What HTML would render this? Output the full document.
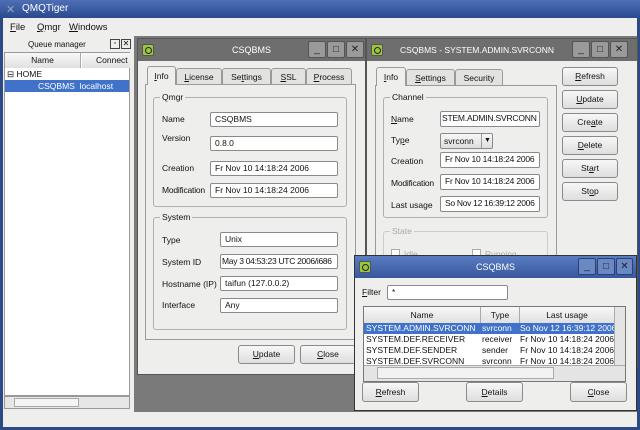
<!DOCTYPE html>
<html><head><style>
*{box-sizing:border-box;margin:0;padding:0}
body{width:640px;height:430px;overflow:hidden;background:#2c4a86;font-family:"Liberation Sans",sans-serif;font-size:8.5px;color:#111;position:relative}
.a{position:absolute}
.bg{background:#eeeeec}
.in{position:absolute;background:#fff;border:1px solid #8a8a8a;border-radius:2px;padding-left:4px;line-height:13px;white-space:nowrap;overflow:hidden;font-size:8.5px}
.lb{position:absolute;font-size:8.5px;white-space:nowrap}
.btn{position:absolute;background:linear-gradient(#f7f7f7,#dedede);border:1px solid #8a8a8a;border-radius:3px;text-align:center;font-size:8.5px}
.grp{position:absolute;border:1px solid #b0b0b0;border-radius:3px}
.gt{position:absolute;top:-6px;left:6px;background:#eeeeec;padding:0 2px;font-size:8.5px}
.tab{position:absolute;background:#e2e2e0;border:1px solid #9a9a9a;border-bottom:none;border-radius:3px 3px 0 0;text-align:center;font-size:8.5px;line-height:16px}
.tab.on{background:#eeeeec;z-index:2}
.pane{position:absolute;border:1px solid #9a9a9a;background:#eeeeec}
.tb{position:absolute;height:22px;color:#fff;font-size:9px;text-align:center;line-height:22px;white-space:nowrap}
.ic{position:absolute;width:12px;height:12px;background:#9bc83a;border:1px solid #555;border-radius:2px}
.ic:after{content:"";position:absolute;left:2px;top:2px;width:5px;height:5px;border:1.5px solid #222;border-radius:50%}
.wb{position:absolute;width:18px;height:17px;border:1px solid #555;border-radius:2px;color:#222;text-align:center;line-height:15px;font-size:10px}
u{text-decoration:underline}
</style></head><body>
<div class="a" style="left:0;top:0;width:640px;height:18px;background:linear-gradient(#4e6fb5,#2a4a90)"></div>
<div class="a" style="left:6px;top:3px;color:#9ab;font-size:11px">✕</div>
<div class="a" style="left:22px;top:3px;color:#fff;font-size:10px">QMQTiger</div>
<div class="a bg" style="left:3px;top:18px;width:634px;height:409px"></div>
<div class="lb" style="left:10px;top:22px;font-size:9.5px"><u>F</u>ile</div>
<div class="lb" style="left:37px;top:22px;font-size:9.5px"><u>Q</u>mgr</div>
<div class="lb" style="left:69px;top:22px;font-size:9.5px"><u>W</u>indows</div>
<div class="lb" style="left:28px;top:40px;font-size:8px">Queue manager</div>
<div class="a" style="left:110px;top:39px;width:10px;height:10px;border:1px solid #444;font-size:7px;line-height:8px;text-align:center">▫</div>
<div class="a" style="left:121px;top:39px;width:10px;height:10px;border:1px solid #444;font-size:8px;line-height:8px;text-align:center">✕</div>
<div class="a" style="left:4px;top:52px;width:126px;height:344px;background:#fff;border:1px solid #999"></div>
<div class="a" style="left:5px;top:53px;width:76px;height:15px;background:linear-gradient(#f8f8f8,#e0e0e0);border-right:1px solid #aaa;text-align:center;line-height:15px">Name</div>
<div class="a" style="left:82px;top:53px;width:48px;height:15px;background:linear-gradient(#f8f8f8,#e0e0e0);padding-left:14px;line-height:15px">Connect</div>
<div class="lb" style="left:7px;top:69px">⊟ HOME</div>
<div class="a" style="left:5px;top:80px;width:124px;height:12px;background:#3f72c8;color:#fff;padding-left:33px;line-height:12px">CSQBMS&nbsp; localhost</div>
<div class="a" style="left:4px;top:396px;width:126px;height:13px;background:#e6e6e6;border:1px solid #999"></div>
<div class="a" style="left:14px;top:398px;width:65px;height:9px;background:#f4f4f4;border:1px solid #aaa"></div>
<div class="a" style="left:134px;top:36px;width:503px;height:376px;background:#7a7a7a"></div>

<div class="a bg" style="left:137px;top:38px;width:229px;height:337px;border:1px solid #555"></div>
<div class="tb" style="left:138px;top:39px;width:227px;background:#6e6e6e">CSQBMS</div>
<div class="ic" style="left:142px;top:44px"></div>
<div class="wb" style="left:308px;top:41px;background:#9a9a9a">_</div>
<div class="wb" style="left:327px;top:41px;background:#9a9a9a">□</div>
<div class="wb" style="left:346px;top:41px;background:#9a9a9a">✕</div>
<div class="pane" style="left:145px;top:84px;width:211px;height:256px"></div>
<div class="tab on" style="left:147px;top:66px;width:29px;height:19px;line-height:18px"><u>I</u>nfo</div>
<div class="tab" style="left:176px;top:68px;width:46px;height:16px"><u>L</u>icense</div>
<div class="tab" style="left:222px;top:68px;width:49px;height:16px">Se<u>t</u>tings</div>
<div class="tab" style="left:271px;top:68px;width:35px;height:16px"><u>S</u>SL</div>
<div class="tab" style="left:306px;top:68px;width:46px;height:16px"><u>P</u>rocess</div>
<div class="grp" style="left:153px;top:97px;width:194px;height:110px"><span class="gt">Qmgr</span></div>
<div class="lb" style="left:162px;top:114px">Name</div>
<div class="lb" style="left:162px;top:133px">Version</div>
<div class="lb" style="left:162px;top:163px">Creation</div>
<div class="lb" style="left:162px;top:185px;letter-spacing:-0.2px">Modification</div>
<div class="in" style="left:210px;top:112px;width:128px;height:15px">CSQBMS</div>
<div class="in" style="left:210px;top:136px;width:128px;height:15px">0.8.0</div>
<div class="in" style="left:210px;top:161px;width:128px;height:15px">Fr Nov 10 14:18:24 2006</div>
<div class="in" style="left:210px;top:183px;width:128px;height:15px">Fr Nov 10 14:18:24 2006</div>
<div class="grp" style="left:153px;top:217px;width:194px;height:113px"><span class="gt">System</span></div>
<div class="lb" style="left:162px;top:235px">Type</div>
<div class="lb" style="left:162px;top:257px">System ID</div>
<div class="lb" style="left:162px;top:279px">Hostname (IP)</div>
<div class="lb" style="left:162px;top:300px">Interface</div>
<div class="in" style="left:220px;top:232px;width:118px;height:15px">Unix</div>
<div class="in" style="left:220px;top:254px;width:118px;height:15px;padding-left:1px;letter-spacing:-0.3px">May 3 04:53:23 UTC 2006/i686</div>
<div class="in" style="left:220px;top:276px;width:118px;height:15px">taifun (127.0.0.2)</div>
<div class="in" style="left:220px;top:298px;width:118px;height:15px">Any</div>
<div class="btn" style="left:238px;top:345px;width:57px;height:19px;line-height:17px"><u>U</u>pdate</div>
<div class="btn" style="left:300px;top:345px;width:56px;height:19px;line-height:17px"><u>C</u>lose</div>

<div class="a bg" style="left:366px;top:38px;width:272px;height:330px;border:1px solid #555"></div>
<div class="tb" style="left:367px;top:39px;width:270px;background:#6e6e6e;padding-right:50px;font-size:8.5px">CSQBMS - SYSTEM.ADMIN.SVRCONN</div>
<div class="ic" style="left:371px;top:44px"></div>
<div class="wb" style="left:572px;top:41px;background:#9a9a9a">_</div>
<div class="wb" style="left:591px;top:41px;background:#9a9a9a">□</div>
<div class="wb" style="left:610px;top:41px;background:#9a9a9a">✕</div>
<div class="pane" style="left:375px;top:85px;width:182px;height:180px"></div>
<div class="tab on" style="left:376px;top:67px;width:30px;height:19px;line-height:18px"><u>I</u>nfo</div>
<div class="tab" style="left:406px;top:69px;width:49px;height:16px"><u>S</u>ettings</div>
<div class="tab" style="left:455px;top:69px;width:48px;height:16px">Security</div>
<div class="grp" style="left:383px;top:97px;width:165px;height:121px"><span class="gt">Channel</span></div>
<div class="lb" style="left:391px;top:114px"><u>N</u>ame</div>
<div class="lb" style="left:391px;top:135px">Ty<u>p</u>e</div>
<div class="lb" style="left:391px;top:156px">Creation</div>
<div class="lb" style="left:391px;top:178px;letter-spacing:-0.2px">Modification</div>
<div class="lb" style="left:391px;top:200px">Last usage</div>
<div class="in" style="left:440px;top:111px;width:100px;height:16px;padding-left:1px;letter-spacing:-0.2px">STEM.ADMIN.SVRCONN</div>
<div class="btn" style="left:440px;top:133px;width:53px;height:16px;line-height:14px;text-align:left;padding-left:3px;border-radius:2px">svrconn<span style="position:absolute;left:40px;top:0;width:12px;height:14px;border-left:1px solid #999;text-align:center;font-size:7px">▼</span></div>
<div class="in" style="left:440px;top:152px;width:100px;height:16px;letter-spacing:-0.2px">Fr Nov 10 14:18:24 2006</div>
<div class="in" style="left:440px;top:174px;width:100px;height:16px;letter-spacing:-0.2px">Fr Nov 10 14:18:24 2006</div>
<div class="in" style="left:440px;top:196px;width:100px;height:16px;letter-spacing:-0.3px">So Nov 12 16:39:12 2006</div>
<div class="grp" style="left:383px;top:231px;width:165px;height:40px;border-color:#ccc"><span class="gt" style="color:#aaa">State</span></div>
<div class="a" style="left:391px;top:249px;width:9px;height:9px;border:1px solid #aaa;background:#fff"></div>
<div class="lb" style="left:404px;top:249px;color:#aaa">Idle</div>
<div class="a" style="left:472px;top:249px;width:9px;height:9px;border:1px solid #aaa;background:#fff"></div>
<div class="lb" style="left:485px;top:249px;color:#aaa">Running</div>
<div class="btn" style="left:562px;top:67px;width:56px;height:19px;line-height:17px"><u>R</u>efresh</div>
<div class="btn" style="left:562px;top:90px;width:56px;height:19px;line-height:17px"><u>U</u>pdate</div>
<div class="btn" style="left:562px;top:113px;width:56px;height:19px;line-height:17px">Cre<u>a</u>te</div>
<div class="btn" style="left:562px;top:136px;width:56px;height:19px;line-height:17px"><u>D</u>elete</div>
<div class="btn" style="left:562px;top:159px;width:56px;height:19px;line-height:17px">St<u>a</u>rt</div>
<div class="btn" style="left:562px;top:182px;width:56px;height:19px;line-height:17px">St<u>o</u>p</div>

<div class="a bg" style="left:354px;top:255px;width:283px;height:156px;border:1px solid #333"></div>
<div class="tb" style="left:355px;top:256px;width:281px;background:linear-gradient(#5a7cc0,#37589e)">CSQBMS</div>
<div class="ic" style="left:359px;top:261px"></div>
<div class="wb" style="left:578px;top:258px;background:#6a88c4;border-color:#2a4070">_</div>
<div class="wb" style="left:597px;top:258px;background:#6a88c4;border-color:#2a4070">□</div>
<div class="wb" style="left:616px;top:258px;background:#6a88c4;border-color:#2a4070;width:17px">✕</div>
<div class="lb" style="left:362px;top:287px"><u>F</u>ilter</div>
<div class="in" style="left:387px;top:285px;width:121px;height:15px">*</div>
<div class="a" style="left:363px;top:306px;width:263px;height:76px;background:#fff;border:1px solid #777"></div>
<div class="a" style="left:364px;top:307px;width:117px;height:16px;background:linear-gradient(#f8f8f8,#e0e0e0);border-right:1px solid #aaa;text-align:center;line-height:16px">Name</div>
<div class="a" style="left:481px;top:307px;width:39px;height:16px;background:linear-gradient(#f8f8f8,#e0e0e0);border-right:1px solid #aaa;text-align:center;line-height:16px">Type</div>
<div class="a" style="left:520px;top:307px;width:94px;height:16px;background:linear-gradient(#f8f8f8,#e0e0e0);text-align:center;line-height:16px">Last usage</div>
<div class="a" style="left:614px;top:307px;width:11px;height:58px;background:#e4e4e4;border-left:1px solid #aaa"></div>
<div class="a" style="left:364px;top:323px;width:250px;height:42px;overflow:hidden;line-height:11px;font-size:8.5px;white-space:nowrap">
<div style="background:#3f72c8;color:#fff;height:11px"><span style="display:inline-block;width:118px;padding-left:2px">SYSTEM.ADMIN.SVRCONN</span><span style="display:inline-block;width:38px">svrconn</span>So Nov 12 16:39:12 2006</div>
<div><span style="display:inline-block;width:118px;padding-left:2px">SYSTEM.DEF.RECEIVER</span><span style="display:inline-block;width:38px">receiver</span>Fr Nov 10 14:18:24 2006</div>
<div><span style="display:inline-block;width:118px;padding-left:2px">SYSTEM.DEF.SENDER</span><span style="display:inline-block;width:38px">sender</span>Fr Nov 10 14:18:24 2006</div>
<div><span style="display:inline-block;width:118px;padding-left:2px">SYSTEM.DEF.SVRCONN</span><span style="display:inline-block;width:38px">svrconn</span>Fr Nov 10 14:18:24 2006</div>
</div>
<div class="a" style="left:364px;top:365px;width:261px;height:16px;background:#e4e4e4;border-top:1px solid #aaa"></div>
<div class="a" style="left:377px;top:367px;width:177px;height:12px;background:#f2f2f2;border:1px solid #aaa"></div>
<div class="btn" style="left:362px;top:382px;width:57px;height:20px;line-height:18px"><u>R</u>efresh</div>
<div class="btn" style="left:466px;top:382px;width:57px;height:20px;line-height:18px"><u>D</u>etails</div>
<div class="btn" style="left:570px;top:382px;width:57px;height:20px;line-height:18px"><u>C</u>lose</div>
</body></html>
